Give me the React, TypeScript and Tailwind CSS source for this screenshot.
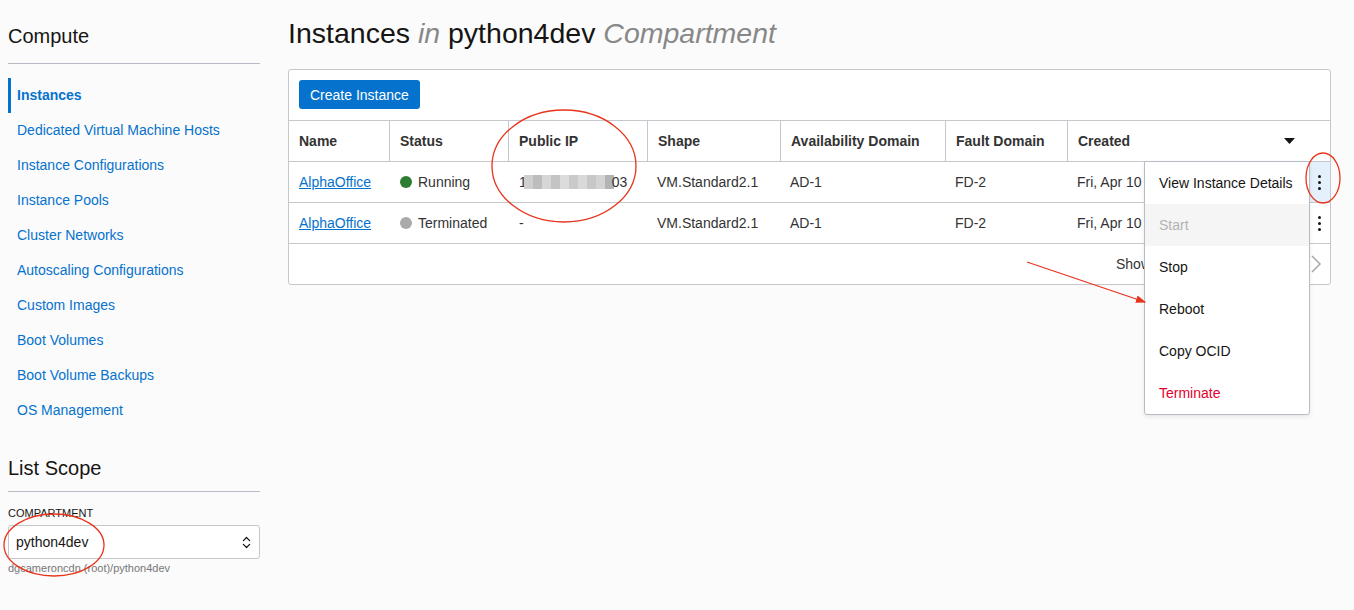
import React from 'react';
import { ChevronsUpDown } from 'lucide-react';

const navItems = [
  'Instances',
  'Dedicated Virtual Machine Hosts',
  'Instance Configurations',
  'Instance Pools',
  'Cluster Networks',
  'Autoscaling Configurations',
  'Custom Images',
  'Boot Volumes',
  'Boot Volume Backups',
  'OS Management',
];

const cols = 'grid grid-cols-[100px_119px_139px_133px_165px_122px_1fr_21px]';

const Kebab: React.FC<{ active?: boolean }> = ({ active }) => (
  <div className={`flex h-full flex-col items-center justify-center gap-[3px] ${active ? 'bg-[#e4f0fb]' : ''}`}>
    <span className="h-[3px] w-[3px] rounded-full bg-[#161513]" />
    <span className="h-[3px] w-[3px] rounded-full bg-[#161513]" />
    <span className="h-[3px] w-[3px] rounded-full bg-[#161513]" />
  </div>
);

const BlurredIp: React.FC = () => {
  const shades = ['#cfcfcf', '#bdbdbd', '#d6d6d6', '#c4c4c4', '#dcdcdc', '#cacaca', '#d9d9d9', '#c7c7c7', '#d3d3d3', '#b3b3b3'];
  return (
    <span className="flex items-center">
      <span>1</span>
      <span className="ml-[-3px] flex h-[14px]">
        {shades.map((c, i) => (
          <span key={i} className="h-full w-[9px]" style={{ backgroundColor: c }} />
        ))}
      </span>
      <span className="ml-[-2px]">03</span>
    </span>
  );
};

const Row: React.FC<{ running?: boolean; active?: boolean }> = ({ running, active }) => (
  <div className={`${cols} h-[41px] items-center border-b border-[#c4c7cc] text-[14px] text-[#333]`}>
    <div className="pl-[10px]">
      <a className="text-[#0572ce] underline">AlphaOffice</a>
    </div>
    <div className="flex items-center gap-[6px] pl-[11px]">
      <span className={`h-[12px] w-[12px] rounded-full ${running ? 'bg-[#2e7d32]' : 'bg-[#aaaaaa]'}`} />
      <span>{running ? 'Running' : 'Terminated'}</span>
    </div>
    <div className="pl-[11px]">{running ? <BlurredIp /> : '-'}</div>
    <div className="pl-[10px]">VM.Standard2.1</div>
    <div className="pl-[10px]">AD-1</div>
    <div className="pl-[10px]">FD-2</div>
    <div className="pl-[10px]">Fri, Apr 10</div>
    <div className="h-full">
      <Kebab active={active} />
    </div>
  </div>
);

const menuItems = ['View Instance Details', 'Start', 'Stop', 'Reboot', 'Copy OCID', 'Terminate'];

export default function App() {
  return (
    <div className="relative min-h-[610px] bg-[#fbfbfb] font-['Liberation_Sans',Arial,sans-serif] text-[#161513]">
      <div className="flex gap-[28px] pl-[8px] pr-[23px]">
        {/* sidebar */}
        <aside className="w-[252px] shrink-0 pt-[24px]">
          <h2 className="text-[20px] leading-[24px] text-[#161513]">Compute</h2>
          <div className="mt-[15px] border-t border-[#b8bcc4]" />
          <nav className="mt-[14px] flex flex-col">
            {navItems.map((item, i) => (
              <a
                key={item}
                className={`flex h-[35px] items-center text-[14px] text-[#0572ce] ${
                  i === 0 ? 'border-l-[3px] border-[#0572ce] pl-[6px] font-bold' : 'pl-[9px]'
                }`}
              >
                {item}
              </a>
            ))}
          </nav>
          <h2 className="mt-[28px] text-[20px] leading-[24px]">List Scope</h2>
          <div className="mt-[11px] border-t border-[#b8bcc4]" />
          <div className="mt-[14px] text-[11px] leading-[14px] uppercase text-[#161513]">Compartment</div>
          <div className="mt-[5px] flex h-[34px] items-center justify-between rounded-[3px] border border-[#c4c7cc] bg-white pl-[7px] pr-[5px] text-[14px]">
            <span className="pt-[1px]">python4dev</span>
            <ChevronsUpDown size={15} strokeWidth={2} className="text-[#161513]" />
          </div>
          <div className="mt-[2px] text-[11px] leading-[14px] text-[#777]">dgcameroncdn (root)/python4dev</div>
        </aside>

        {/* main */}
        <main className="flex-1 pt-[16px]">
          <h1 className="text-[28.5px] leading-[34px] text-[#161513]">
            Instances <i className="text-[#888]">in</i> python4dev <i className="text-[#888]">Compartment</i>
          </h1>
          <div className="relative mt-[19px] rounded-[3px] border border-[#c4c7cc] bg-white">
            <div className="px-[10px] pt-[10px] pb-[11px]">
              <button className="h-[29px] rounded-[3px] bg-[#0572ce] px-[11px] pt-[1px] text-[14px] text-white">
                Create Instance
              </button>
            </div>
            <div className={`${cols} h-[42px] items-center border-y border-[#c4c7cc] text-[14px] font-bold text-[#333]`}>
              <div className="pl-[10px]">Name</div>
              <div className="flex h-full items-center border-l border-[#c4c7cc] pl-[10px]">Status</div>
              <div className="flex h-full items-center border-l border-[#c4c7cc] pl-[10px]">Public IP</div>
              <div className="flex h-full items-center border-l border-[#c4c7cc] pl-[10px]">Shape</div>
              <div className="flex h-full items-center border-l border-[#c4c7cc] pl-[10px]">Availability Domain</div>
              <div className="flex h-full items-center border-l border-[#c4c7cc] pl-[10px]">Fault Domain</div>
              <div className="col-span-2 flex h-full items-center justify-between border-l border-[#c4c7cc] pl-[10px] pr-[35px]">
                <span>Created</span>
                <svg width="11" height="6" viewBox="0 0 11 6">
                  <path d="M0 0h11L5.5 6z" fill="#161513" />
                </svg>
              </div>
            </div>
            <Row running active />
            <Row />
            <div className="flex h-[40px] items-center text-[14px] text-[#333]">
              <span className="ml-[827px] w-[28px] overflow-hidden whitespace-nowrap">Showing 2 Items</span>
              <svg width="12" height="18" viewBox="0 0 12 18" className="ml-auto mr-[8px]">
                <path d="M2 1l8 8-8 8" fill="none" stroke="#a8a8a8" strokeWidth="1.5" />
              </svg>
            </div>

            {/* actions menu */}
            <div className="absolute top-[91px] left-[855px] w-[166px] rounded-b-[3px] border border-[#b8bcc4] bg-white text-[14px] shadow-[0_2px_4px_rgba(0,0,0,0.08)]">
              {menuItems.map((m) => (
                <div
                  key={m}
                  className={`flex h-[42px] items-center px-[14px] ${
                    m === 'Start'
                      ? 'bg-[#f5f5f5] text-[#b3b3b3]'
                      : m === 'Terminate'
                        ? 'text-[#e4002b]'
                        : 'text-[#161513]'
                  }`}
                >
                  {m}
                </div>
              ))}
            </div>
          </div>
        </main>
      </div>

      {/* annotations drawn over the screenshot */}
      <svg className="pointer-events-none absolute inset-0" width="1354" height="610">
        <defs>
          <marker id="ah" markerWidth="8" markerHeight="8" refX="7" refY="4" orient="auto">
            <path d="M0 1L8 4L0 7z" fill="#e8341c" />
          </marker>
        </defs>
        <ellipse cx="564" cy="166" rx="72" ry="56" fill="none" stroke="#e8341c" strokeWidth="1.3" />
        <ellipse cx="1323" cy="178" rx="17" ry="25" fill="none" stroke="#e8341c" strokeWidth="1.3" />
        <ellipse cx="54" cy="545" rx="50" ry="31" fill="none" stroke="#e8341c" strokeWidth="1.3" />
        <line x1="1027" y1="262" x2="1145" y2="302" stroke="#e8341c" strokeWidth="1.3" markerEnd="url(#ah)" />
      </svg>
    </div>
  );
}
